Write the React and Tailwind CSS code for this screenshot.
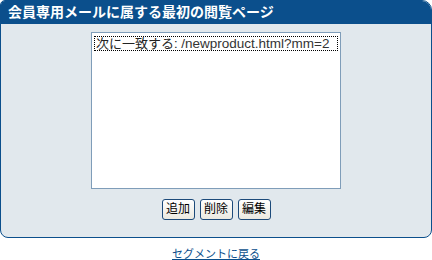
export default function App() {
  const jp = { fontFamily: "'Liberation Sans', 'Noto Sans CJK JP', sans-serif" };

  return (
    <div className="w-[432px] h-[260px] bg-white" style={jp}>
      {/* Panel */}
      <div className="w-[432px] h-[238px] flex flex-col border border-[#0b4f8c] rounded-tl-[5px] rounded-tr-[10px] rounded-b-[8px] bg-[#e1e8ed] overflow-hidden">
        <div className="h-[23px] shrink-0 bg-[#0b4f8c] text-white text-[14px] font-bold leading-[22px] pl-[7px]">
          会員専用メールに属する最初の閲覧ページ
        </div>

        <div className="flex flex-col items-center pt-[8px]">
          {/* Listbox */}
          <div className="w-[250px] h-[157px] bg-white border border-[#7f9db9] px-[2px] py-[3px]">
            <div className="h-[15px] border border-dotted border-black text-[13px] leading-[13px] px-[1px] text-[#222] whitespace-nowrap overflow-hidden">
              次に一致する: <span className="text-[#333] text-[13.5px]">/newproduct.html?mm=2</span>
            </div>
          </div>

          {/* Buttons */}
          <div className="flex gap-[5px] mt-[10px]">
            {['追加', '削除', '編集'].map((label) => (
              <button
                key={label}
                className="w-[33px] h-[21px] rounded-[3px] border border-[#1c4a7a] bg-gradient-to-b from-white to-[#ebe9e0] text-[12px] leading-[19px] text-black"
              >
                {label}
              </button>
            ))}
          </div>
        </div>
      </div>

      {/* Back link */}
      <div className="text-center mt-[8px] text-[11px] leading-[16px]">
        <a href="#" className="text-[#0b4f8c] underline">セグメントに戻る</a>
      </div>
    </div>
  );
}
